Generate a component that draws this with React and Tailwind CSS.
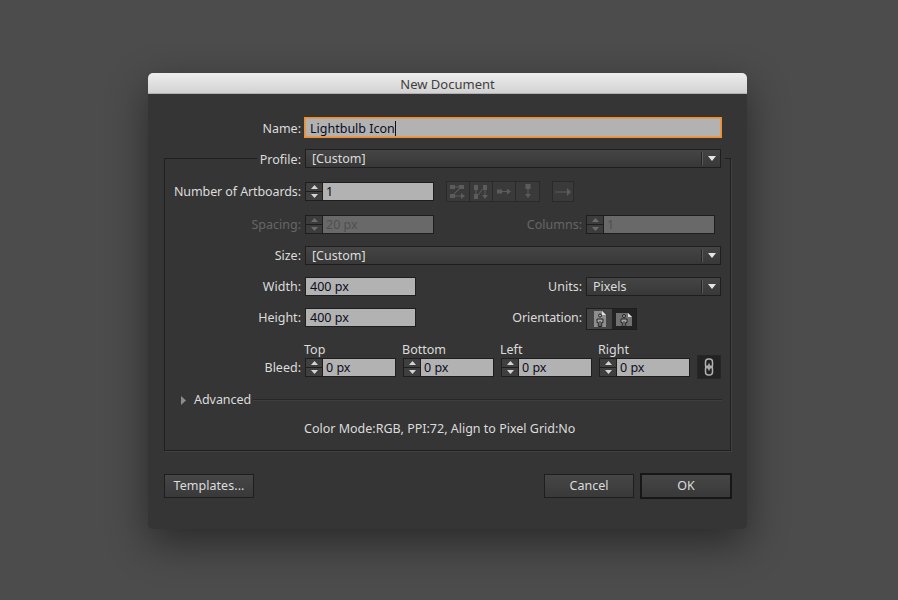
const font = { fontFamily: '"Noto Sans", "Open Sans", sans-serif' };

function Label({ className = "", disabled, children }) {
  return (
    <span className={`shrink-0 text-right text-[12.5px] leading-[19px] ${disabled ? "text-[#666666]" : "text-[#dcdcdc]"} ${className}`}>
      {children}
    </span>
  );
}

function Stepper({ disabled }) {
  const fill = disabled ? "#6c6c6c" : "#d4d4d4";
  return (
    <div className={`flex h-full w-[17px] shrink-0 flex-col border-r border-[#1e1e1e] ${disabled ? "bg-[#3c3c3c]" : "bg-[#3f3f3f]"}`}>
      <div className="flex h-1/2 items-center justify-center border-b border-[#1e1e1e]">
        <svg width="7" height="4" viewBox="0 0 7 4"><path d="M3.500 0 L7 4 H0 Z" fill={fill} /></svg>
      </div>
      <div className="flex h-1/2 items-center justify-center">
        <svg width="7" height="4" viewBox="0 0 7 4"><path d="M3.500 4 L7 0 H0 Z" fill={fill} /></svg>
      </div>
    </div>
  );
}

function SpinField({ value, disabled, className = "" }) {
  return (
    <div className={`flex h-[19px] border border-[#1e1e1e] ${className}`}>
      <Stepper disabled={disabled} />
      <div className={`flex-1 pl-[3px] text-[12.5px] leading-[18px] ${disabled ? "bg-[#696969] text-[#4f4f4f]" : "bg-[#b2b2b2] text-[#0c0c1c]"}`}>
        {value}
      </div>
    </div>
  );
}

function Select({ value, className = "" }) {
  return (
    <div className={`flex h-[19px] items-center border border-[#1e1e1e] bg-gradient-to-b from-[#454545] to-[#383838] pl-[6px] text-[12.5px] text-[#dcdcdc] ${className}`}>
      <span className="flex-1 leading-[15px]">{value}</span>
      <span className="mr-[5px] h-[13px] w-[2px] border-l border-[#262626] bg-[#5a5a5a]" />
      <svg className="mr-[4px]" width="8" height="5" viewBox="0 0 8 5"><path d="M0 0 H8 L4 5 Z" fill="#e6e6e6" /></svg>
    </div>
  );
}

function TextField({ value }) {
  return (
    <div className="h-[19px] w-[111px] border border-[#1e1e1e] bg-[#b2b2b2] pl-[4px] text-[12.5px] leading-[18px] text-[#0c0c1c]">
      {value}
    </div>
  );
}

function Button({ className = "", children }) {
  return (
    <button className={`bg-gradient-to-b from-[#464646] to-[#393939] pt-px text-[12.5px] text-[#dcdcdc] ${className}`}>
      {children}
    </button>
  );
}

function ArtboardIcon({ kind }) {
  return (
    <svg width="16" height="16" viewBox="0 0 16 16" fill="#5c5c5c">
      {kind === "grid-row" && (
        <>
          <rect x="0" y="1" width="5" height="4" />
          <rect x="9" y="1" width="5" height="4" />
          <path d="M5 2.500h4v1H5zM9.500 5.500l-5 4.500-.7-.7 5-4.500z" />
          <rect x="0" y="10" width="5" height="4" />
          <path d="M5 11.500h6V9l4 3-4 3v-2.500H5z" />
        </>
      )}
      {kind === "grid-col" && (
        <>
          <rect x="1" y="1" width="4" height="5" />
          <rect x="10" y="1" width="4" height="5" />
          <rect x="1" y="10" width="4" height="5" />
          <path d="M2.500 6h1v4h-1zM5 10.500l4-5.500.8.600-4 5.500zM11.500 6h1v5H15l-3 4-3-4h2.500z" />
        </>
      )}
      {kind === "row" && (
        <>
          <rect x="1" y="5.500" width="5" height="4" />
          <path d="M6 7h5V4.500l4 3-4 3V8H6z" />
        </>
      )}
      {kind === "col" && (
        <>
          <rect x="5.500" y="0" width="5" height="5" />
          <path d="M7.500 5h1v5H11l-3 4-3-4h2.500z" />
        </>
      )}
    </svg>
  );
}

// page with a corner fold and an outlined figure, portrait or landscape
function PersonPage({ landscape }) {
  return (
    <svg width="18" height="18" viewBox="0 0 18 18">
      {landscape ? (
        <>
          <path d="M1 3 H13 L17 7 V16 H1 Z" fill="#717171" />
          <path d="M13 3 L17 7 H13 Z" fill="#e2e2e2" />
        </>
      ) : (
        <>
          <path d="M3 1 H11 L15 5 V17 H3 Z" fill="#8e8e8e" />
          <path d="M11 1 L15 5 H11 Z" fill="#e2e2e2" />
        </>
      )}
      <g fill="#a6a6a6" stroke="#161616" strokeWidth="0.900">
        <circle cx="9" cy={landscape ? 6 : 5.5} r="1.500" />
        <path d="M6 9 H12 V12.500 H10.700 V16.500 H7.300 V12.500 H6 Z" />
        <path d="M9 11 V16.500" />
      </g>
    </svg>
  );
}

export default function App() {
  return (
    <div className="min-h-screen bg-[#4c4c4c] pt-[73px] pl-[148px]" style={font}>
      <div className="flex h-[456px] w-[599px] flex-col overflow-hidden rounded-[5px] bg-[#353535] shadow-[0_14px_40px_rgba(0,0,0,0.45)]">
        <div className="h-[21px] shrink-0 border-b border-[#b0b0b0] bg-gradient-to-b from-[#eeeeee] to-[#d2d2d2] text-center text-[13px] leading-[22px] text-[#404040]">
          New Document
        </div>

        <div className="flex flex-1 flex-col px-4 pt-[23px]">
          {/* Name */}
          <div className="flex h-[21px] items-center">
            <Label className="w-[137px] translate-y-px">Name:</Label>
            <div className="ml-[3px] h-[21px] w-[418px] border border-[#ff8a1c] bg-[#b2b2b2] pl-[5px] text-[12.5px] leading-[20px] text-[#0c0c1c] shadow-[inset_0_0_0_1px_rgba(240,138,36,0.5)]">
              Lightbulb Icon<span className="inline-block h-[15px] w-px translate-y-[3px] bg-[#111111]" />
            </div>
          </div>

          {/* Document profile box */}
          <div className="mt-[20px] flex w-[567px] flex-col border border-[#1f1f1f] pb-[13px] shadow-[1px_1px_0_rgba(255,255,255,0.06)]">
            <div className="-mt-[10px] ml-[92px] flex w-[468px] bg-[#353535]">
              <Label className="w-[44px] translate-y-px">Profile:</Label>
              <Select value="[Custom]" className="ml-[4px] w-[416px]" />
            </div>

            <div className="mt-[13px] flex items-center">
              <Label className="w-[136px] tracking-[-0.1px]">Number of Artboards:</Label>
              <SpinField value="1" className="ml-[4px] w-[129px]" />
              <div className="ml-[12px] flex h-[21px] border border-[#2a2a2a]">
                {["grid-row", "grid-col", "row", "col"].map((kind) => (
                  <div key={kind} className="flex w-[23px] items-center justify-center border-r border-[#2a2a2a] bg-[#3a3a3a] last:border-r-0">
                    <ArtboardIcon kind={kind} />
                  </div>
                ))}
              </div>
              <div className="ml-[12px] flex h-[21px] w-[22px] items-center justify-center border border-[#2a2a2a] bg-[#3a3a3a]">
                <svg width="16" height="10" viewBox="0 0 16 10" fill="#5c5c5c"><path d="M0 4.500h12V1l4 4-4 4V5.500H0z" /></svg>
              </div>
            </div>

            <div className="mt-[13px] flex">
              <Label disabled className="w-[136px]">Spacing:</Label>
              <SpinField disabled value="20 px" className="ml-[4px] w-[129px]" />
              <Label disabled className="w-[148px]">Columns:</Label>
              <SpinField disabled value="1" className="ml-[4px] w-[129px]" />
            </div>

            <div className="mt-[12px] flex">
              <Label className="w-[136px]">Size:</Label>
              <Select value="[Custom]" className="ml-[4px] w-[416px]" />
            </div>

            <div className="mt-[12px] flex">
              <Label className="w-[136px]">Width:</Label>
              <div className="ml-[4px]"><TextField value="400 px" /></div>
              <Label className="w-[166px]">Units:</Label>
              <Select value="Pixels" className="ml-[4px] w-[135px]" />
            </div>

            <div className="mt-[12px] flex h-[19px]">
              <Label className="w-[136px]">Height:</Label>
              <div className="ml-[4px]"><TextField value="400 px" /></div>
              <Label className="w-[166px] tracking-[-0.1px]">Orientation:</Label>
              <div className="ml-[4px] flex h-[22px] w-[51px] border border-[#1e1e1e]">
                <div className="flex w-[25px] items-center justify-center bg-[#444444]"><PersonPage /></div>
                <div className="flex flex-1 items-center justify-center bg-[#232323]"><PersonPage landscape /></div>
              </div>
            </div>

            <div className="mt-[17px] flex items-end">
              <Label className="w-[136px]">Bleed:</Label>
              <div className="ml-[4px] flex gap-[7px]">
                {["Top", "Bottom", "Left", "Right"].map((side) => (
                  <div key={side} className="flex w-[91px] flex-col">
                    <span className="-ml-px h-[14px] -translate-y-px text-[12.5px] leading-[14px] text-[#dcdcdc]">{side}</span>
                    <SpinField value="0 px" />
                  </div>
                ))}
              </div>
              <div className="-mb-[2px] ml-[7px] flex h-[24px] w-[24px] items-center justify-center border border-[#262626] bg-[#232323]">
                <svg width="10" height="18" viewBox="0 0 10 18" fill="none" stroke="#b0b0b0" strokeWidth="1.500">
                  <rect x="1.500" y="1" width="7" height="9" rx="3" />
                  <rect x="1.500" y="8" width="7" height="9" rx="3" />
                  <path d="M5 5.500V12.500" />
                </svg>
              </div>
            </div>

            <div className="mt-[15px] flex h-[16px] items-center pr-[8px]">
              <svg className="ml-[16px]" width="5" height="9" viewBox="0 0 5 9"><path d="M0 0 L5 4.500 L0 9 Z" fill="#8c8c8c" /></svg>
              <span className="ml-[8px] text-[12.5px] leading-[16px] tracking-[-0.05px] text-[#dcdcdc]">Advanced</span>
              <span className="ml-[2px] h-[2px] flex-1 border-t border-[#272727] bg-[#3f3f3f]" />
            </div>

            <div className="mt-[13px] ml-[139px] text-[12.5px] leading-[16px] text-[#dcdcdc]">
              Color Mode:RGB, PPI:72, Align to Pixel Grid:No
            </div>
          </div>

          {/* Footer buttons */}
          <div className="-mr-px mt-[22px] flex h-[26px] items-center">
            <Button className="h-[24px] w-[90px] border border-[#1e1e1e] tracking-[0.05px]">Templates...</Button>
            <Button className="ml-auto h-[24px] w-[90px] border border-[#1e1e1e]">Cancel</Button>
            <Button className="ml-[6px] h-[26px] w-[92px] border-2 border-[#171717]">OK</Button>
          </div>
        </div>
      </div>
    </div>
  );
}
